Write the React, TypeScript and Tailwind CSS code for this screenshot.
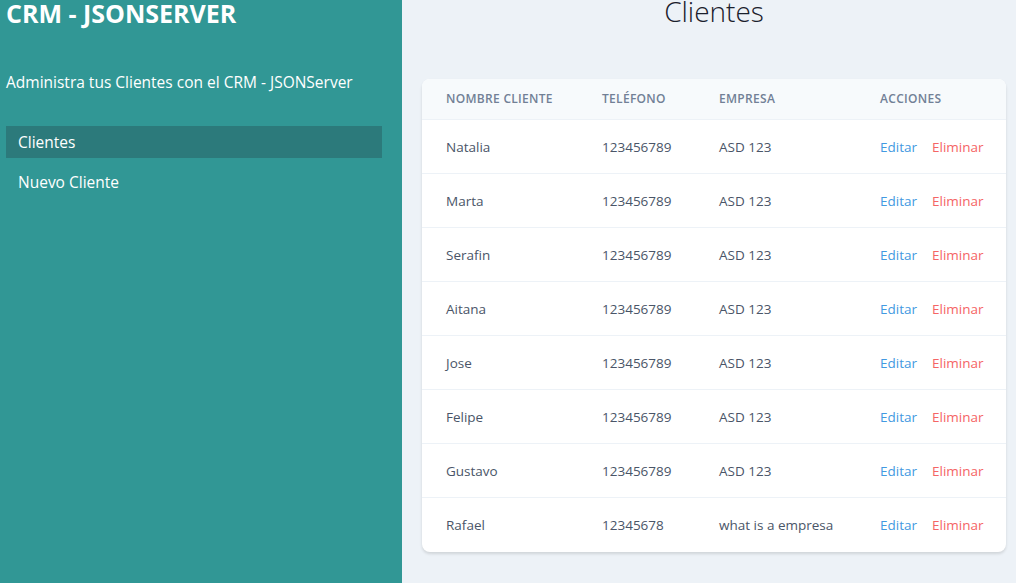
const clientes = [
  { nombre: "Natalia", telefono: "123456789", empresa: "ASD 123" },
  { nombre: "Marta", telefono: "123456789", empresa: "ASD 123" },
  { nombre: "Serafin", telefono: "123456789", empresa: "ASD 123" },
  { nombre: "Aitana", telefono: "123456789", empresa: "ASD 123" },
  { nombre: "Jose", telefono: "123456789", empresa: "ASD 123" },
  { nombre: "Felipe", telefono: "123456789", empresa: "ASD 123" },
  { nombre: "Gustavo", telefono: "123456789", empresa: "ASD 123" },
  { nombre: "Rafael", telefono: "12345678", empresa: "what is a empresa" },
];

const th = "py-3 text-left text-[12px] leading-4 font-semibold tracking-wide text-[#718096] uppercase";
const td = "pt-[17px] text-[13.5px] leading-5 text-[#4a5568]";

export default function App() {
  return (
    <div className="flex h-[583px] overflow-hidden font-['Open_Sans',sans-serif]">
      {/* Sidebar */}
      <aside className="w-[402px] shrink-0 bg-[#319795] px-[6px] pr-[20px]">
        <h2 className="-mt-[3px] text-[25px] leading-8 font-bold text-white">CRM - JSONSERVER</h2>
        <p className="mt-[41px] text-[15.5px] leading-6 text-white">Administra tus Clientes con el CRM - JSONServer</p>
        <nav className="mt-[32px] flex flex-col">
          <a className="block h-8 bg-[#2c7a7b] px-3 text-[15.5px] leading-8 text-white">Clientes</a>
          <a className="mt-2 block h-8 px-3 text-[15.5px] leading-8 text-white">Nuevo Cliente</a>
        </nav>
      </aside>

      {/* Main */}
      <main className="flex-1 bg-[#edf2f7] pl-5 pr-[10px]">
        <h1 className="-mt-[7px] text-center text-[28px] leading-9 font-light text-[#1a202c]">Clientes</h1>
        <div className="mt-[50px] overflow-hidden rounded-lg bg-white shadow-[0_2px_3px_rgba(0,0,0,0.12)]">
          <table className="w-full table-fixed border-collapse">
            <thead>
              <tr className="border-b border-[#edf2f7] bg-[#f7fafc]">
                <th className={`w-[180px] pl-6 ${th}`}>Nombre Cliente</th>
                <th className={`w-[117px] ${th}`}>Teléfono</th>
                <th className={`w-[161px] ${th}`}>Empresa</th>
                <th className={th}>Acciones</th>
              </tr>
            </thead>
            <tbody>
              {clientes.map((c, i) => {
                const last = i === clientes.length - 1;
                const cell = `${td} ${last ? "pb-[17px]" : "pb-4"}`;
                return (
                  <tr key={c.nombre} className={last ? "" : "border-b border-[#edf2f7]"}>
                    <td className={`pl-6 ${cell}`}>{c.nombre}</td>
                    <td className={cell}>{c.telefono}</td>
                    <td className={cell}>{c.empresa}</td>
                    <td className={cell}>
                      <button className="mr-[15px] text-[#4299e1]">Editar</button>
                      <button className="text-[#f56565]">Eliminar</button>
                    </td>
                  </tr>
                );
              })}
            </tbody>
          </table>
        </div>
      </main>
    </div>
  );
}
